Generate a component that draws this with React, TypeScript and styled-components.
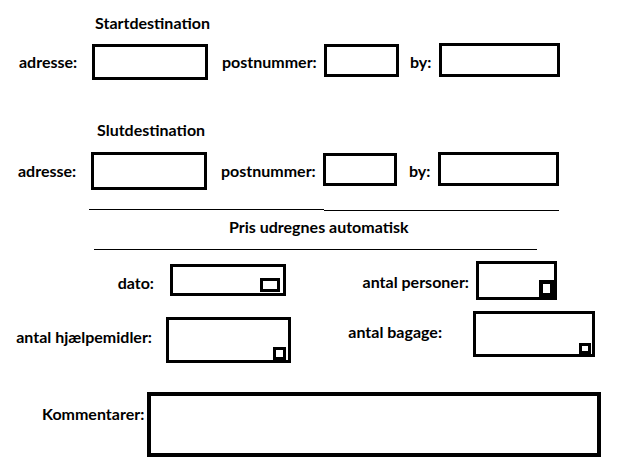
import React from "react";
import styled, { createGlobalStyle } from "styled-components";

const Global = createGlobalStyle`
  html, body { margin: 0; padding: 0; background: #fff; }
  body { font-family: Lato, "Open Sans", sans-serif; color: #000; }
`;

const Page = styled.div`
  width: 624px;
  height: 469px;
  display: flex;
  flex-direction: column;
  overflow: hidden;
`;

const Title = styled.div<{ $ml: number; $mt: number }>`
  margin-left: ${(p) => p.$ml}px;
  margin-top: ${(p) => p.$mt}px;
  font-size: 16px;
  font-weight: 700;
  line-height: 16px;
  height: 16px;
`;

const Row = styled.div<{ $mt: number }>`
  display: flex;
  align-items: flex-start;
  margin-top: ${(p) => p.$mt}px;
`;

const LabelCell = styled.div<{ $w: number; $pl?: number; $right?: boolean; $gap?: number; $dy?: number }>`
  width: ${(p) => p.$w}px;
  padding-left: ${(p) => p.$pl ?? 0}px;
  padding-right: ${(p) => p.$gap ?? 0}px;
  box-sizing: border-box;
  align-self: center;
  text-align: ${(p) => (p.$right ? "right" : "left")};
  font-size: 16px;
  font-weight: 700;
  line-height: 18px;
  white-space: nowrap;
  position: relative;
  top: ${(p) => p.$dy ?? 0}px;
`;

const Box = styled.div<{ $w: number; $h: number; $mt?: number; $b?: number; $pr?: number; $pb?: number }>`
  width: ${(p) => p.$w}px;
  height: ${(p) => p.$h}px;
  margin-top: ${(p) => p.$mt ?? 0}px;
  border: ${(p) => p.$b ?? 3}px solid #000;
  box-sizing: border-box;
  background: #fff;
  display: flex;
  justify-content: flex-end;
  align-items: flex-end;
  padding-right: ${(p) => p.$pr ?? 0}px;
  padding-bottom: ${(p) => p.$pb ?? 0}px;
  flex-shrink: 0;
`;

const Spinner = styled.div<{ $w: number; $h: number; $b: number }>`
  width: ${(p) => p.$w}px;
  height: ${(p) => p.$h}px;
  border: ${(p) => p.$b}px solid #000;
  box-sizing: border-box;
  background: #fff;
`;

const Divider = styled.div<{ $ml: number; $mt: number }>`
  display: flex;
  align-items: flex-start;
  margin-left: ${(p) => p.$ml}px;
  margin-top: ${(p) => p.$mt}px;
  height: 2px;
`;

const Segment = styled.div<{ $w: number; $dy?: number }>`
  width: ${(p) => p.$w}px;
  height: 1px;
  background: #000;
  margin-top: ${(p) => p.$dy ?? 0}px;
`;

const Caption = styled.div<{ $ml: number; $mt: number }>`
  margin-left: ${(p) => p.$ml}px;
  margin-top: ${(p) => p.$mt}px;
  font-size: 16px;
  font-weight: 700;
  line-height: 16px;
  height: 16px;
`;

export default function App() {
  return (
    <>
      <Global />
      <Page>
        <Title $ml={95} $mt={15}>Startdestination</Title>
        <Row $mt={12}>
          <LabelCell $w={92} $pl={19}>adresse:</LabelCell>
          <Box $w={116} $h={36} $mt={1} />
          <LabelCell $w={116} $pl={14}>postnummer:</LabelCell>
          <Box $w={75} $h={33} $mt={1} />
          <LabelCell $w={40} $pl={11}>by:</LabelCell>
          <Box $w={121} $h={34} />
        </Row>

        <Title $ml={97} $mt={42}>Slutdestination</Title>
        <Row $mt={14}>
          <LabelCell $w={91} $pl={18}>adresse:</LabelCell>
          <Box $w={116} $h={38} />
          <LabelCell $w={116} $pl={14}>postnummer:</LabelCell>
          <Box $w={74} $h={33} $mt={1} />
          <LabelCell $w={41} $pl={12}>by:</LabelCell>
          <Box $w={121} $h={34} />
        </Row>

        <Divider $ml={89} $mt={19}>
          <Segment $w={235} />
          <Segment $w={235} $dy={1} />
        </Divider>
        <Caption $ml={229} $mt={8}>Pris udregnes automatisk</Caption>
        <Divider $ml={94} $mt={14}>
          <Segment $w={443} />
        </Divider>

        <Row $mt={10}>
          <LabelCell $w={170} $right $gap={16} $dy={2}>dato:</LabelCell>
          <Box $w={116} $h={32} $mt={3} $pr={3} $pb={1}>
            <Spinner $w={20} $h={14} $b={3} />
          </Box>
          <LabelCell $w={190} $right $gap={7} $dy={1}>antal personer:</LabelCell>
          <Box $w={81} $h={39}>
            <Spinner $w={15} $h={17} $b={4} />
          </Box>
        </Row>

        <Row $mt={11}>
          <LabelCell $w={166} $right $gap={14}>antal hjælpemidler:</LabelCell>
          <Box $w={125} $h={46} $mt={6} $pr={2}>
            <Spinner $w={13} $h={13} $b={3} />
          </Box>
          <LabelCell $w={182} $right $gap={31} $dy={-5}>antal bagage:</LabelCell>
          <Box $w={122} $h={46} $pr={1}>
            <Spinner $w={12} $h={11} $b={3} />
          </Box>
        </Row>

        <Row $mt={29}>
          <LabelCell $w={147} $pl={42} $dy={-11}>Kommentarer:</LabelCell>
          <Box $w={454} $h={65} $b={4} />
        </Row>
      </Page>
    </>
  );
}
